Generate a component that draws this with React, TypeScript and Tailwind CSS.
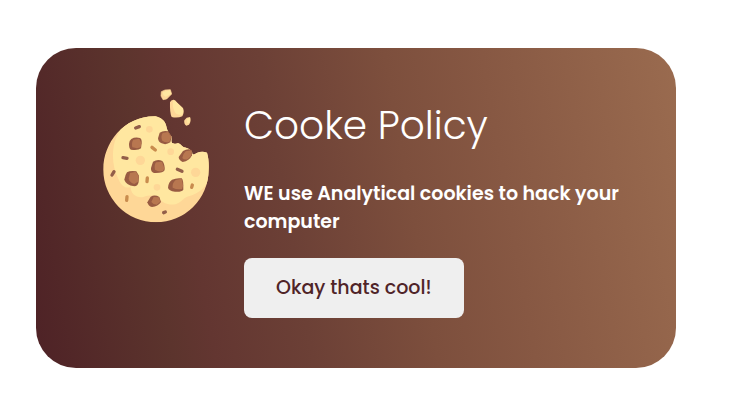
function CookieArt() {
  return (
    <svg viewBox="15 24 336 408" className="h-[136px] w-[112px] shrink-0" role="img" aria-label="Cookie">
      <defs>
        <clipPath id="cookie-body">
          <path d="M181 109C196 112 211 121 214 139Q217 157 230 170C229 183 228 187 234 190Q242 193 246 190C257 189 258 198 267 202C277 204 293 211 292 222Q297 226 305 219Q321 212 336 218C341 235 342 252 341 270A158 158 0 0 1 183 427A158 158 0 0 1 25 267C25 190 85 108 181 109Z" />
        </clipPath>
      </defs>
      <g clipPath="url(#cookie-body)">
        <rect x="15" y="100" width="336" height="332" fill="#fed797" />
        <path d="M62 177C50 208 50 260 70 296C80 322 96 326 107 321C106 340 124 355 145 351C163 346 176 345 190 351C202 373 232 380 252 368C263 363 267 352 281 349C313 341 333 319 345 296L351 100H100Z" fill="#ffe7a0" />
        <g fill="#fed797">
          <circle cx="163" cy="148" r="10" />
          <circle cx="136" cy="241" r="14" />
          <circle cx="227" cy="215" r="10" />
          <circle cx="302" cy="277" r="14" />
          <circle cx="186" cy="322" r="10" />
        </g>
      </g>
      <g fill="#985b42">
        <path d="M109 177Q120 170 135 174Q141 177 140 190L138 205Q130 212 108 209Q102 207 102 192Q102 182 109 177Z" />
        <path d="M194 158Q205 150 220 154L230 170L226 187Q213 196 200 190Q190 187 189 175Z" />
        <path d="M264 213Q278 205 290 210L291 226Q283 243 263 246Q251 240 251 231Z" />
        <path d="M174 245Q188 236 202 243Q210 253 209 270Q206 280 177 279Q167 276 168 264Z" />
        <path d="M96 277Q106 271 124 274L132 287L131 306Q128 319 118 319Q92 314 88 299Q90 285 96 277Z" />
        <path d="M231 299Q244 293 260 295Q266 299 265 329Q259 337 240 335Q221 332 219 323Q220 306 231 299Z" />
        <path d="M167 350Q180 343 193 351L198 366Q189 379 171 381Q160 379 157 367Z" />
      </g>
      <g fill="#b87750">
        <path d="M115 179L133 176L139 188L137 202Q128 207 112 202Q109 187 115 179Z" />
        <path d="M203 159L219 156L229 171L223 186Q212 189 202 182Q196 170 203 159Z" />
        <path d="M272 214L289 211L290 226L278 238Q266 240 262 234Q263 222 272 214Z" />
        <path d="M183 247L201 245L208 265L204 273Q192 277 180 269Q177 255 183 247Z" />
        <path d="M105 279L123 275L131 289L129 305L118 312Q104 308 101 296Z" />
        <path d="M242 300L260 296L264 317L261 327Q244 329 233 323Q231 310 242 300Z" />
        <path d="M176 351L192 352L196 365L185 374Q174 374 169 366Z" />
      </g>
      <g stroke="#925e49" strokeWidth="10" strokeLinecap="round">
        <path d="M122 144L133 140M84 233L96 235M51 285L57 275M247 268L261 274M206 398L211 396" />
      </g>
      <g stroke="#c98c4e" strokeWidth="10" strokeLinecap="round">
        <path d="M171 202L181 210M157 294L156 305M96 350L95 361M292 315L290 322" />
      </g>
      <path d="M199 35L210 30L226 29L230 42L215 57L204 59L198 48Z" fill="#fed797" stroke="#fed797" strokeWidth="2" strokeLinejoin="round" />
      <path d="M204 36L225 30L228 42L212 50Q202 45 204 36Z" fill="#ffe7a0" />
      <path d="M235 59Q240 58 247 68L264 84Q269 98 262 109Q247 115 230 111Q224 99 225 67Q228 59 235 59Z" fill="#fed797" />
      <path d="M236 60L247 69L264 86Q267 101 259 105Q245 105 240 97Q229 75 236 60Z" fill="#ffe7a0" />
      <path d="M275 113L285 111Q290 122 282 134L274 137Q266 133 268 121Z" fill="#fed797" />
      <path d="M277 116L284 113Q287 123 280 130Q274 129 277 116Z" fill="#ffe7a0" />
    </svg>
  );
}

export default function App() {
  return (
    <main className="bg-white px-9 py-12 font-[Poppins,Inter,sans-serif]">
      <section
        aria-labelledby="policy-title"
        className="flex min-h-80 w-full max-w-[640px] items-start gap-8 rounded-[40px] bg-[linear-gradient(80deg,#4e2226_0%,#5c342d_20%,#633631_26%,#6c4036_40%,#7d4f3d_58%,#875843_72%,#9a6b4f_100%)] py-10 pr-12 pl-16"
      >
        <CookieArt />
        <div className="flex flex-1 flex-col items-start pt-2 text-white">
          <h1 id="policy-title" className="mb-6 text-[39px] leading-[60px] font-light">
            Cooke Policy
          </h1>
          <p className="mb-[22px] text-[19px] leading-7 font-semibold">
            WE use Analytical cookies to hack your computer
          </p>
          <button type="button" className="h-[60px] rounded-lg bg-[#efefef] px-8 text-[19px] font-medium text-[#4f2428]">
            Okay thats cool!
          </button>
        </div>
      </section>
    </main>
  );
}
